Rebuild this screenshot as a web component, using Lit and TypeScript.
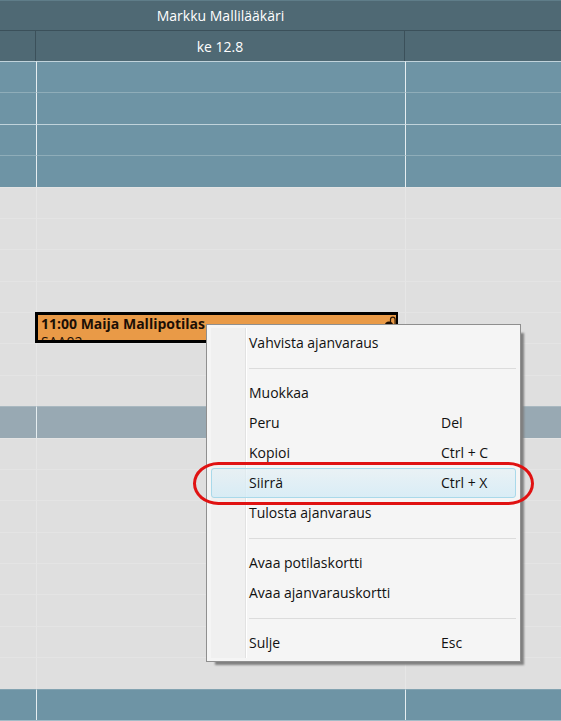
import { LitElement, html, css, nothing } from "lit";
import { customElement, property } from "lit/decorators.js";

type SlotKind = "closed" | "open" | "break";

interface MenuEntry {
  label: string;
  shortcut?: string;
  active?: boolean;
}

const SLOTS: SlotKind[] = [
  ...Array<SlotKind>(4).fill("closed"),
  ...Array<SlotKind>(7).fill("open"),
  "break",
  ...Array<SlotKind>(8).fill("open"),
  "closed",
];

const APPOINTMENT_SLOT = 8;

const MENU: MenuEntry[][] = [
  [{ label: "Vahvista ajanvaraus" }],
  [
    { label: "Muokkaa" },
    { label: "Peru", shortcut: "Del" },
    { label: "Kopioi", shortcut: "Ctrl + C" },
    { label: "Siirrä", shortcut: "Ctrl + X", active: true },
    { label: "Tulosta ajanvaraus" },
  ],
  [{ label: "Avaa potilaskortti" }, { label: "Avaa ajanvarauskortti" }],
  [{ label: "Sulje", shortcut: "Esc" }],
];

@customElement("appointment-card")
export class AppointmentCard extends LitElement {
  @property() time = "";
  @property() patient = "";
  @property() code = "";

  static styles = css`
    :host {
      display: block;
    }
    .card {
      display: block;
      position: relative;
      box-sizing: border-box;
      width: 100%;
      height: 100%;
      padding: 0 3px;
      overflow: hidden;
      border: 3px solid #000;
      border-width: 3px 2px 3px 3px;
      background: #e99a47;
      color: #1c0f05;
      font: 14px/18px "Open Sans", "Noto Sans", sans-serif;
      text-align: left;
    }
    .line {
      display: block;
      white-space: nowrap;
    }
    .title {
      font-weight: 700;
    }
    .lock {
      position: absolute;
      top: 0;
      right: 0;
      width: 12px;
      height: 16px;
    }
  `;

  render() {
    return html`
      <button class="card">
        <span class="line title">${this.time} ${this.patient}</span>
        <span class="line">${this.code}</span>
        <svg class="lock" viewBox="0 0 12 16" aria-hidden="true">
          <path d="M6.5 9V4.500a2.300 2.300 0 0 1 4.600 0V9" fill="none" stroke="#2a1705" stroke-width="1.2" />
          <ellipse cx="5" cy="11" rx="4.500" ry="4.500" fill="#1a0d02" />
        </svg>
      </button>
    `;
  }
}

@customElement("context-menu")
export class ContextMenu extends LitElement {
  @property({ attribute: false }) groups: MenuEntry[][] = [];

  static styles = css`
    :host {
      display: block;
    }
    .menu {
      box-sizing: border-box;
      padding: 3px 4px;
      border: 1px solid #8f8f8f;
      background: #f5f5f5;
      box-shadow: 6px 6px 2px -3px #808080;
      font: 14px/20px "Open Sans", "Noto Sans", sans-serif;
      color: #111;
    }
    .entries {
      background: linear-gradient(
        to right,
        #f0f0f0 34px,
        #e2e2e2 34px 35px,
        #fff 35px 36px,
        transparent 36px
      );
    }
    .rule {
      height: 1px;
      margin: 10px 0 9px 38px;
      border: 0;
      background: #dcdcdc;
    }
    .entry {
      position: relative;
      display: grid;
      grid-template-columns: 1fr 74px;
      align-items: center;
      box-sizing: border-box;
      width: 100%;
      height: 30px;
      padding: 0 0 0 37px;
      border: 1px solid transparent;
      border-radius: 3px;
      background: none;
      color: inherit;
      font: inherit;
      text-align: left;
      white-space: nowrap;
    }
    .active {
      border-color: #a9d9ea;
      background: linear-gradient(rgba(226, 239, 245, 0.6), rgba(210, 235, 246, 0.8));
    }
    .ring {
      position: absolute;
      inset: -7px -19px -8px;
      border: 3px solid #e01212;
      border-radius: 26px / 22px;
      pointer-events: none;
    }
  `;

  render() {
    return html`
      <div class="menu">
        <div class="entries" role="menu">
          ${this.groups.map(
            (group, i) => html`
              ${i ? html`<hr class="rule" />` : nothing}
              ${group.map(
                (entry) => html`
                  <button class="entry ${entry.active ? "active" : ""}" role="menuitem">
                    <span>${entry.label}</span>
                    <span>${entry.shortcut ?? nothing}</span>
                    ${entry.active ? html`<span class="ring"></span>` : nothing}
                  </button>
                `,
              )}
            `,
          )}
        </div>
      </div>
    `;
  }
}

@customElement("app-root")
export class AppRoot extends LitElement {
  static styles = css`
    :host {
      display: block;
      position: relative;
      min-height: 100vh;
      overflow: hidden;
      background: #dfdfdf;
      font: 14px/20px "Open Sans", "Noto Sans", sans-serif;
    }
    .calendar {
      box-sizing: border-box;
      width: 100%;
      height: 100vh;
      border-bottom: 1px solid #a3bcc7;
      border-spacing: 0;
      table-layout: fixed;
    }
    .gutter {
      width: 36px;
    }
    .next {
      width: 156px;
    }
    th,
    td {
      box-sizing: border-box;
      padding: 0;
    }
    th {
      background: #4f6974;
      color: #fff;
      font-weight: 400;
    }
    .doctor th {
      height: 31px;
      border-top: 1px solid #5f7d89;
      border-bottom: 1px solid #3b505a;
    }
    .day th {
      height: 30px;
      padding-top: 1px;
      border-right: 1px solid #3b505a;
    }
    .day th:last-child {
      border-right: 0;
    }
    td {
      position: relative;
      height: 31px;
      border-top: 1px solid #e4e4e4;
    }
    td + td {
      border-left: 1px solid #e6e6e6;
    }
    .closed td {
      border-top-color: #8fadb9;
      background: #6e94a5;
    }
    .closed:nth-child(odd) td {
      border-top-color: #c0d3db;
    }
    .closed:last-child td {
      border-top-color: #83a3b1;
    }
    .break td {
      border-top-color: #a9b8c0;
      background: #98a9b3;
    }
    .closed td + td,
    .break td + td {
      border-left-color: #e6eef1;
    }
    .appointment {
      position: absolute;
      inset: -1px 7px 0 -2px;
    }
    .popup {
      position: absolute;
      left: 206px;
      top: 324px;
      width: 315px;
    }
  `;

  render() {
    return html`
      <table class="calendar">
        <colgroup>
          <col class="gutter" />
          <col />
          <col class="next" />
        </colgroup>
        <thead>
          <tr class="doctor">
            <th></th>
            <th scope="col">Markku Mallilääkäri</th>
            <th></th>
          </tr>
          <tr class="day">
            <th></th>
            <th scope="col">ke 12.8</th>
            <th></th>
          </tr>
        </thead>
        <tbody>
          ${SLOTS.map(
            (kind, i) => html`
              <tr class=${kind}>
                <td></td>
                <td>
                  ${i === APPOINTMENT_SLOT
                    ? html`<appointment-card
                        class="appointment"
                        time="11:00"
                        patient="Maija Mallipotilas"
                        code="SAA02"
                      ></appointment-card>`
                    : nothing}
                </td>
                <td></td>
              </tr>
            `,
          )}
        </tbody>
      </table>
      <context-menu class="popup" .groups=${MENU}></context-menu>
    `;
  }
}
